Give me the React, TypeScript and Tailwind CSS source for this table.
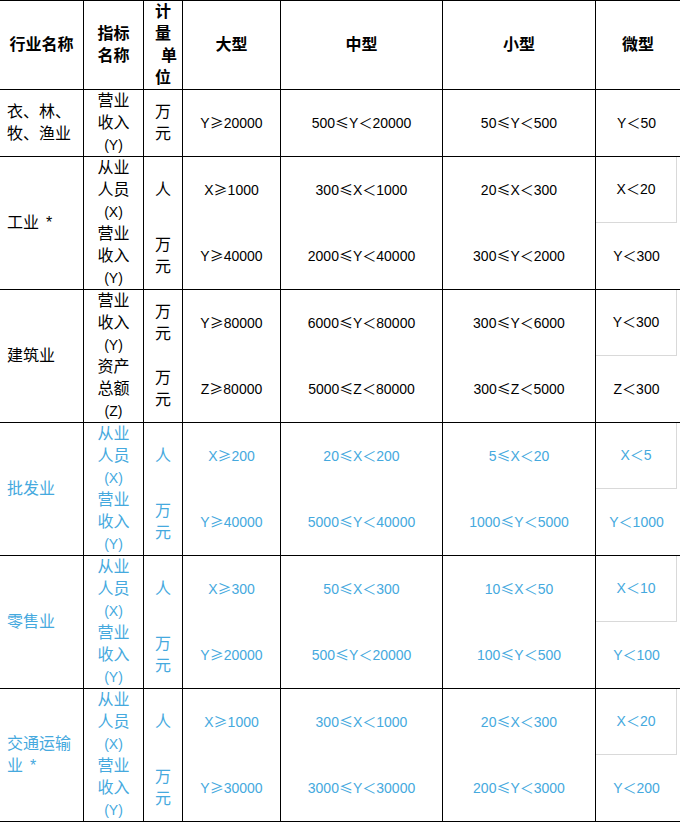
import React from 'react';

type Row = {
  name: React.ReactNode;
  blue: boolean;
  m1: string[];
  u1: string;
  m2: string[];
  u2: string;
  vals: [string, string][];
};

function Val({ t }: { t: string }) {
  const parts = t.split(/([≥≤＜])/);
  return (
    <span className="-mt-[2px] font-['Liberation_Sans','Noto_Sans_CJK_SC',sans-serif] text-[14px] leading-[22px] whitespace-nowrap">
      {parts.map((p, i) =>
        /[≥≤＜]/.test(p) ? (
          <span key={i} className="font-['Noto_Sans_CJK_SC',sans-serif]">
            {p}
          </span>
        ) : (
          <React.Fragment key={i}>{p}</React.Fragment>
        )
      )}
    </span>
  );
}

function Lines({ lines }: { lines: string[] }) {
  return (
    <>
      {lines.map((l, i) =>
        l.startsWith('(') ? (
          <div key={i} className="h-[22px] leading-[22px] text-[14px]">
            {l}
          </div>
        ) : (
          <div key={i} className="h-[22px] leading-[22px]">
            {l}
          </div>
        )
      )}
    </>
  );
}

function Unit({ u }: { u: string }) {
  return (
    <div className="flex flex-col items-center">
      {u.split('').map((c, i) => (
        <div key={i} className="leading-[22px]">
          {c}
        </div>
      ))}
    </div>
  );
}

const rows: Row[] = [
  {
    name: (
      <div>
        工业<span className="ml-[7px]">*</span>
      </div>
    ),
    blue: false,
    m1: ['从业', '人员', '(X)'],
    u1: '人',
    m2: ['营业', '收入', '(Y)'],
    u2: '万元',
    vals: [
      ['X≥1000', 'Y≥40000'],
      ['300≤X＜1000', '2000≤Y＜40000'],
      ['20≤X＜300', '300≤Y＜2000'],
      ['X＜20', 'Y＜300'],
    ],
  },
  {
    name: <div>建筑业</div>,
    blue: false,
    m1: ['营业', '收入', '(Y)'],
    u1: '万元',
    m2: ['资产', '总额', '(Z)'],
    u2: '万元',
    vals: [
      ['Y≥80000', 'Z≥80000'],
      ['6000≤Y＜80000', '5000≤Z＜80000'],
      ['300≤Y＜6000', '300≤Z＜5000'],
      ['Y＜300', 'Z＜300'],
    ],
  },
  {
    name: <div>批发业</div>,
    blue: true,
    m1: ['从业', '人员', '(X)'],
    u1: '人',
    m2: ['营业', '收入', '(Y)'],
    u2: '万元',
    vals: [
      ['X≥200', 'Y≥40000'],
      ['20≤X＜200', '5000≤Y＜40000'],
      ['5≤X＜20', '1000≤Y＜5000'],
      ['X＜5', 'Y＜1000'],
    ],
  },
  {
    name: <div>零售业</div>,
    blue: true,
    m1: ['从业', '人员', '(X)'],
    u1: '人',
    m2: ['营业', '收入', '(Y)'],
    u2: '万元',
    vals: [
      ['X≥300', 'Y≥20000'],
      ['50≤X＜300', '500≤Y＜20000'],
      ['10≤X＜50', '100≤Y＜500'],
      ['X＜10', 'Y＜100'],
    ],
  },
  {
    name: (
      <div>
        <div>交通运输</div>
        <div>
          业<span className="ml-[7px]">*</span>
        </div>
      </div>
    ),
    blue: true,
    m1: ['从业', '人员', '(X)'],
    u1: '人',
    m2: ['营业', '收入', '(Y)'],
    u2: '万元',
    vals: [
      ['X≥1000', 'Y≥30000'],
      ['300≤X＜1000', '3000≤Y＜30000'],
      ['20≤X＜300', '200≤Y＜3000'],
      ['X＜20', 'Y＜200'],
    ],
  },
];

const GRID =
  'grid grid-cols-[84px_60px_39px_98px_162px_153px_84px] border-b border-black';
const CELL = 'border-r border-black';

function Half({ children }: { children: React.ReactNode }) {
  return <div className="h-[66px] flex items-center justify-center">{children}</div>;
}

export default function App() {
  return (
    <div className="w-[680px] h-[822px] bg-white overflow-hidden font-['Liberation_Sans','Noto_Sans_CJK_SC',sans-serif] text-[16px] text-black">
      <div className="border-t border-black">
        {/* header */}
        <div className={`${GRID} h-[89px] font-bold`}>
          <div className={`${CELL} flex items-center justify-center`}>行业名称</div>
          <div className={`${CELL} flex flex-col items-center justify-center leading-[22px]`}>
            <div>指标</div>
            <div>名称</div>
          </div>
          <div className={`${CELL} flex flex-col items-center justify-center leading-[22px]`}>
            <div>计</div>
            <div>量</div>
            <div className="pl-[12px]">单</div>
            <div>位</div>
          </div>
          <div className={`${CELL} flex items-center justify-center`}>大型</div>
          <div className={`${CELL} flex items-center justify-center`}>中型</div>
          <div className={`${CELL} flex items-center justify-center`}>小型</div>
          <div className="flex items-center justify-center">微型</div>
        </div>

        {/* row 1 */}
        <div className={`${GRID} h-[67px]`}>
          <div className={`${CELL} flex flex-col justify-center pl-[7px] leading-[22px]`}>
            <div>衣、林、</div>
            <div>牧、渔业</div>
          </div>
          <div className={`${CELL} flex flex-col items-center`}>
            <Lines lines={['营业', '收入', '(Y)']} />
          </div>
          <div className={`${CELL} flex items-center justify-center`}>
            <Unit u="万元" />
          </div>
          <div className={`${CELL} flex items-center justify-center`}>
            <Val t="Y≥20000" />
          </div>
          <div className={`${CELL} flex items-center justify-center`}>
            <Val t="500≤Y＜20000" />
          </div>
          <div className={`${CELL} flex items-center justify-center`}>
            <Val t="50≤Y＜500" />
          </div>
          <div className="flex items-center justify-center w-[81px]">
            <Val t="Y＜50" />
          </div>
        </div>

        {rows.map((r, idx) => (
          <div key={idx} className={`${GRID} h-[133px] ${r.blue ? 'text-[#45a9de]' : ''}`}>
            <div className={`${CELL} flex flex-col justify-center pl-[7px] leading-[22px]`}>
              {r.name}
            </div>
            <div className={`${CELL} flex flex-col items-center`}>
              <Lines lines={r.m1} />
              <Lines lines={r.m2} />
            </div>
            <div className={`${CELL} flex flex-col`}>
              <Half>
                <Unit u={r.u1} />
              </Half>
              <Half>
                <Unit u={r.u2} />
              </Half>
            </div>
            {r.vals.slice(0, 3).map((v, i) => (
              <div key={i} className={`${CELL} flex flex-col`}>
                <Half>
                  <Val t={v[0]} />
                </Half>
                <Half>
                  <Val t={v[1]} />
                </Half>
              </div>
            ))}
            <div className="flex flex-col">
              <div className="h-[66px] w-[81px] border-r border-b border-[#d9d9d9] flex items-center justify-center">
                <Val t={r.vals[3][0]} />
              </div>
              <div className="h-[66px] w-[81px] flex items-center justify-center">
                <Val t={r.vals[3][1]} />
              </div>
            </div>
          </div>
        ))}
      </div>
    </div>
  );
}
